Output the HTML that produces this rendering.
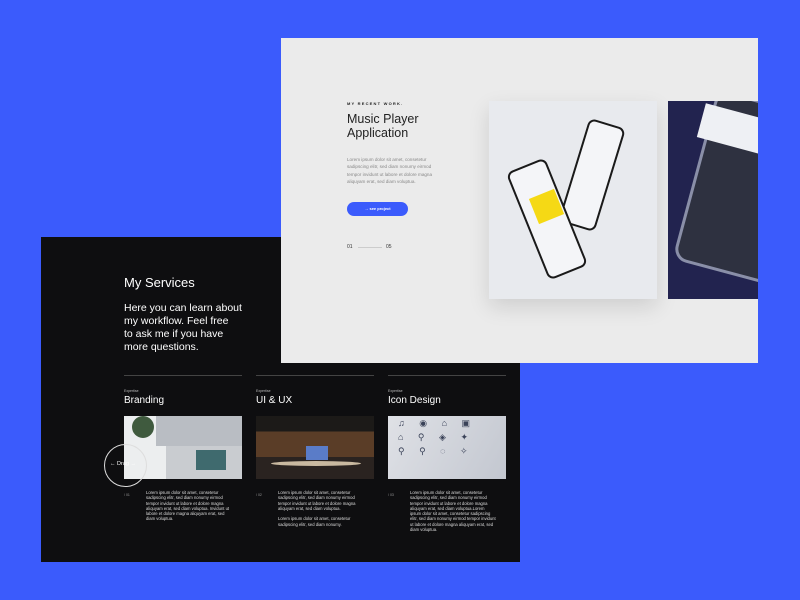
<!DOCTYPE html>
<html><head><style>
body{margin:0;width:800px;height:600px;background:#3b5bfc;position:relative;overflow:hidden;font-family:"Liberation Sans",sans-serif}
.dark{position:absolute;left:41px;top:237px;width:479px;height:325px;background:#0e0e10;color:#fff}
.light{position:absolute;left:281px;top:38px;width:477px;height:325px;background:#ebebeb;overflow:hidden}
.a{position:absolute}
.lbl{font-size:3.5px;color:#bbb}
.h{font-size:10px;color:#fff}
.txt{font-size:4.2px;line-height:5.3px;color:#ddd}
.num{font-size:3.5px;color:#999}
</style></head><body>
<div class="dark">
 <div class="a" style="left:83px;top:38px;font-size:13px">My Services</div>
 <div class="a" style="left:83px;top:65px;white-space:nowrap;font-size:10.5px;line-height:13px">Here you can learn about<br>my workflow. Feel free<br>to ask me if you have<br>more questions.</div>
 <div class="a" style="left:83px;top:138px;width:118px;height:1px;background:#444"></div>
 <div class="a" style="left:215px;top:138px;width:118px;height:1px;background:#444"></div>
 <div class="a" style="left:347px;top:138px;width:118px;height:1px;background:#444"></div>

 <div class="a lbl" style="left:83px;top:152px">Expertise</div>
 <div class="a h" style="left:83px;top:158px">Branding</div>
 <div class="a" style="left:83px;top:179px;width:118px;height:63px;background:linear-gradient(90deg,#e6e8ea 0 35%,#c9ccd0 35% 100%);overflow:hidden">
  <div class="a" style="left:0;top:0;width:42px;height:63px;background:#eceeef"></div>
  <div class="a" style="left:32px;top:0;width:86px;height:30px;background:#b9bdc3"></div>
  <div class="a" style="left:8px;top:0;width:22px;height:22px;border-radius:50%;background:#3f5a3e"></div>
  <div class="a" style="left:72px;top:34px;width:30px;height:20px;background:#3f6a6e"></div>
 </div>
 <div class="a" style="left:63px;top:207px;width:41px;height:41px;border:1px solid #ddd;border-radius:50%"></div>
 <div class="a" style="left:69px;top:224px;font-size:5.5px">← Drag →</div>
 <div class="a num" style="left:83px;top:256px">/ 01</div>
 <div class="a txt" style="left:105px;top:253px;width:86px">Lorem ipsum dolor sit amet, consetetur sadipscing elitr, sed diam nonumy eirmod tempor invidunt ut labore et dolore magna aliquyam erat, sed diam voluptua. Invidunt ut labore et dolore magna aliquyam erat, sed diam voluptua.</div>

 <div class="a lbl" style="left:215px;top:152px">Expertise</div>
 <div class="a h" style="left:215px;top:158px">UI &amp; UX</div>
 <div class="a" style="left:215px;top:179px;width:118px;height:63px;background:linear-gradient(180deg,#1c1a18 0 25%,#5a3d27 25% 65%,#2a2320 65%)">
  <div class="a" style="left:50px;top:30px;width:22px;height:14px;background:#5a7cc8"></div>
  <div class="a" style="left:15px;top:45px;width:90px;height:5px;border-radius:50%;background:#c9b9a0"></div>
 </div>
 <div class="a num" style="left:215px;top:256px">/ 02</div>
 <div class="a txt" style="left:237px;top:253px;width:86px">Lorem ipsum dolor sit amet, consetetur sadipscing elitr, sed diam nonumy eirmod tempor invidunt ut labore et dolore magna aliquyam erat, sed diam voluptua.<br><br>Lorem ipsum dolor sit amet, consetetur sadipscing elitr, sed diam nonumy.</div>

 <div class="a lbl" style="left:347px;top:152px">Expertise</div>
 <div class="a h" style="left:347px;top:158px">Icon Design</div>
 <div class="a" style="left:347px;top:179px;width:118px;height:63px;background:linear-gradient(120deg,#dfe1e6,#c3c7d0);font-size:9px;color:#3a4258;line-height:14px;letter-spacing:6px;padding-left:10px;box-sizing:border-box;overflow:hidden">♫ ◉ ⌂ ▣<br>⌂ ⚲ ◈ ✦<br>⚲ ⚲ ◌ ✧</div>
 <div class="a num" style="left:347px;top:256px">/ 03</div>
 <div class="a txt" style="left:369px;top:253px;width:86px">Lorem ipsum dolor sit amet, consetetur sadipscing elitr, sed diam nonumy eirmod tempor invidunt ut labore et dolore magna aliquyam erat, sed diam voluptua.Lorem ipsum dolor sit amet, consetetur sadipscing elitr, sed diam nonumy eirmod tempor invidunt ut labore et dolore magna aliquyam erat, sed diam voluptua.</div>
</div>

<div class="light">
 <div class="a" style="left:66px;top:63px;font-size:4px;letter-spacing:1.2px;font-weight:bold;color:#222">MY RECENT WORK.</div>
 <div class="a" style="left:66px;top:74px;font-size:12.5px;line-height:14px;color:#222">Music Player<br>Application</div>
 <div class="a" style="left:66px;top:118px;width:90px;font-size:4.6px;line-height:7.3px;color:#888">Lorem ipsum dolor sit amet, consetetur sadipscing elitr, sed diam nonumy eirmod tempor invidunt ut labore et dolore magna aliquyam erat, sed diam voluptua.</div>
 <div class="a" style="left:66px;top:164px;width:61px;height:14px;border-radius:7px;background:#3b5bfc;color:#fff;font-size:4px;line-height:14px;font-weight:bold;text-align:center">→ see project</div>
 <div class="a" style="left:66px;top:206px;font-size:5px;color:#333">01</div>
 <div class="a" style="left:77px;top:209px;width:24px;height:1px;background:#ccc"></div>
 <div class="a" style="left:105px;top:206px;font-size:5px;color:#333">05</div>
 <div class="a" style="left:208px;top:63px;width:168px;height:198px;background:#e8eaee;box-shadow:0 8px 20px rgba(0,0,0,.12);overflow:hidden">
  <div class="a" style="left:84px;top:20px;width:34px;height:104px;border-radius:7px;background:#f4f5f8;border:2px solid #1a1a1a;transform:rotate(17deg)"></div>
  <div class="a" style="left:37px;top:60px;width:38px;height:112px;border-radius:7px;background:#f4f5f8;border:2px solid #1a1a1a;transform:rotate(-22deg)"></div>
  <div class="a" style="left:44px;top:92px;width:27px;height:27px;background:#f5d915;transform:rotate(-22deg)"></div>
 </div>
 <div class="a" style="left:387px;top:63px;width:90px;height:198px;background:#22234f;overflow:hidden">
  <div class="a" style="left:25px;top:0px;width:110px;height:170px;border-radius:14px;background:#2e3140;border:3px solid #8a8fa8;transform:rotate(15deg)"></div>
  <div class="a" style="left:32px;top:12px;width:80px;height:35px;background:#eef0f4;transform:rotate(15deg)"></div>
 </div>
</div>
</body></html>
